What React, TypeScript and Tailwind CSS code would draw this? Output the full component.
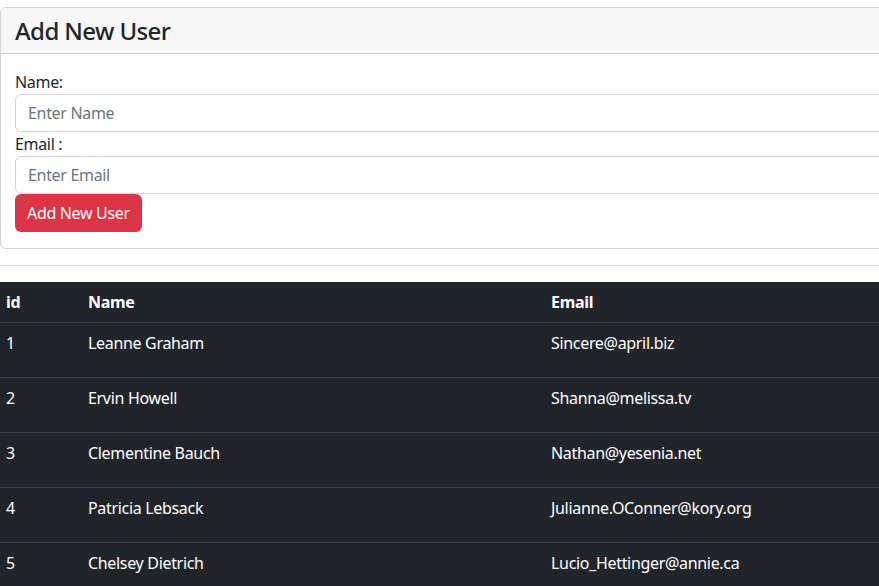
const users = [
  { id: 1, name: "Leanne Graham", email: "Sincere@april.biz" },
  { id: 2, name: "Ervin Howell", email: "Shanna@melissa.tv" },
  { id: 3, name: "Clementine Bauch", email: "Nathan@yesenia.net" },
  { id: 4, name: "Patricia Lebsack", email: "Julianne.OConner@kory.org" },
  { id: 5, name: "Chelsey Dietrich", email: "Lucio_Hettinger@annie.ca" },
];

const App = () => {
  return (
    <div className="w-screen h-screen overflow-hidden bg-white text-[#212529] font-['Noto_Sans',sans-serif] tracking-[-0.02em]">
      <div className="w-[900px] pt-[7px]">
        {/* Form card */}
        <div className="border border-[#d3d3d3] rounded-[6px] overflow-hidden">
          <div className="bg-[#f7f7f7] border-b border-[#d3d3d3] h-[46px] flex items-center px-[14px]">
            <h3 className="text-[24px] font-medium leading-tight tracking-[-0.025em]">Add New User</h3>
          </div>
          <div className="px-[14px] pt-[16px] pb-[16px]">
            <label className="block text-[16px] leading-6">Name:</label>
            <input
              type="text"
              placeholder="Enter Name"
              className="block w-full h-[38px] px-3 border border-[#d3d3d3] rounded-[6px] text-[16px] placeholder:text-[#6c757d] outline-none"
            />
            <label className="block text-[16px] leading-6">Email :</label>
            <input
              type="text"
              placeholder="Enter Email"
              className="block w-full h-[38px] px-3 border border-[#d3d3d3] rounded-[6px] text-[16px] placeholder:text-[#6c757d] outline-none"
            />
            <button className="h-[38px] px-3 bg-[#dc3545] text-white text-[16px] rounded-[6px]">
              Add New User
            </button>
          </div>
        </div>

        <div className="mt-4 mb-4 border-t border-[#d3d3d3]" />

        {/* Users table */}
        <table className="w-full bg-[#212529] text-white text-[16px] border-collapse">
          <thead>
            <tr className="h-[40px] border-b border-[#373b3e]">
              <th className="text-left font-bold px-[6px] w-[88px]">id</th>
              <th className="text-left font-bold px-0 w-[463px]">Name</th>
              <th className="text-left font-bold px-0">Email</th>
            </tr>
          </thead>
          <tbody>
            {users.map((u) => (
              <tr key={u.id} className="h-[55px] border-b border-[#373b3e] align-top">
                <td className="px-[6px] pt-[8px]">{u.id}</td>
                <td className="pt-[8px]">{u.name}</td>
                <td className="pt-[8px]">{u.email}</td>
              </tr>
            ))}
          </tbody>
        </table>
      </div>
    </div>
  );
};

export default App;
